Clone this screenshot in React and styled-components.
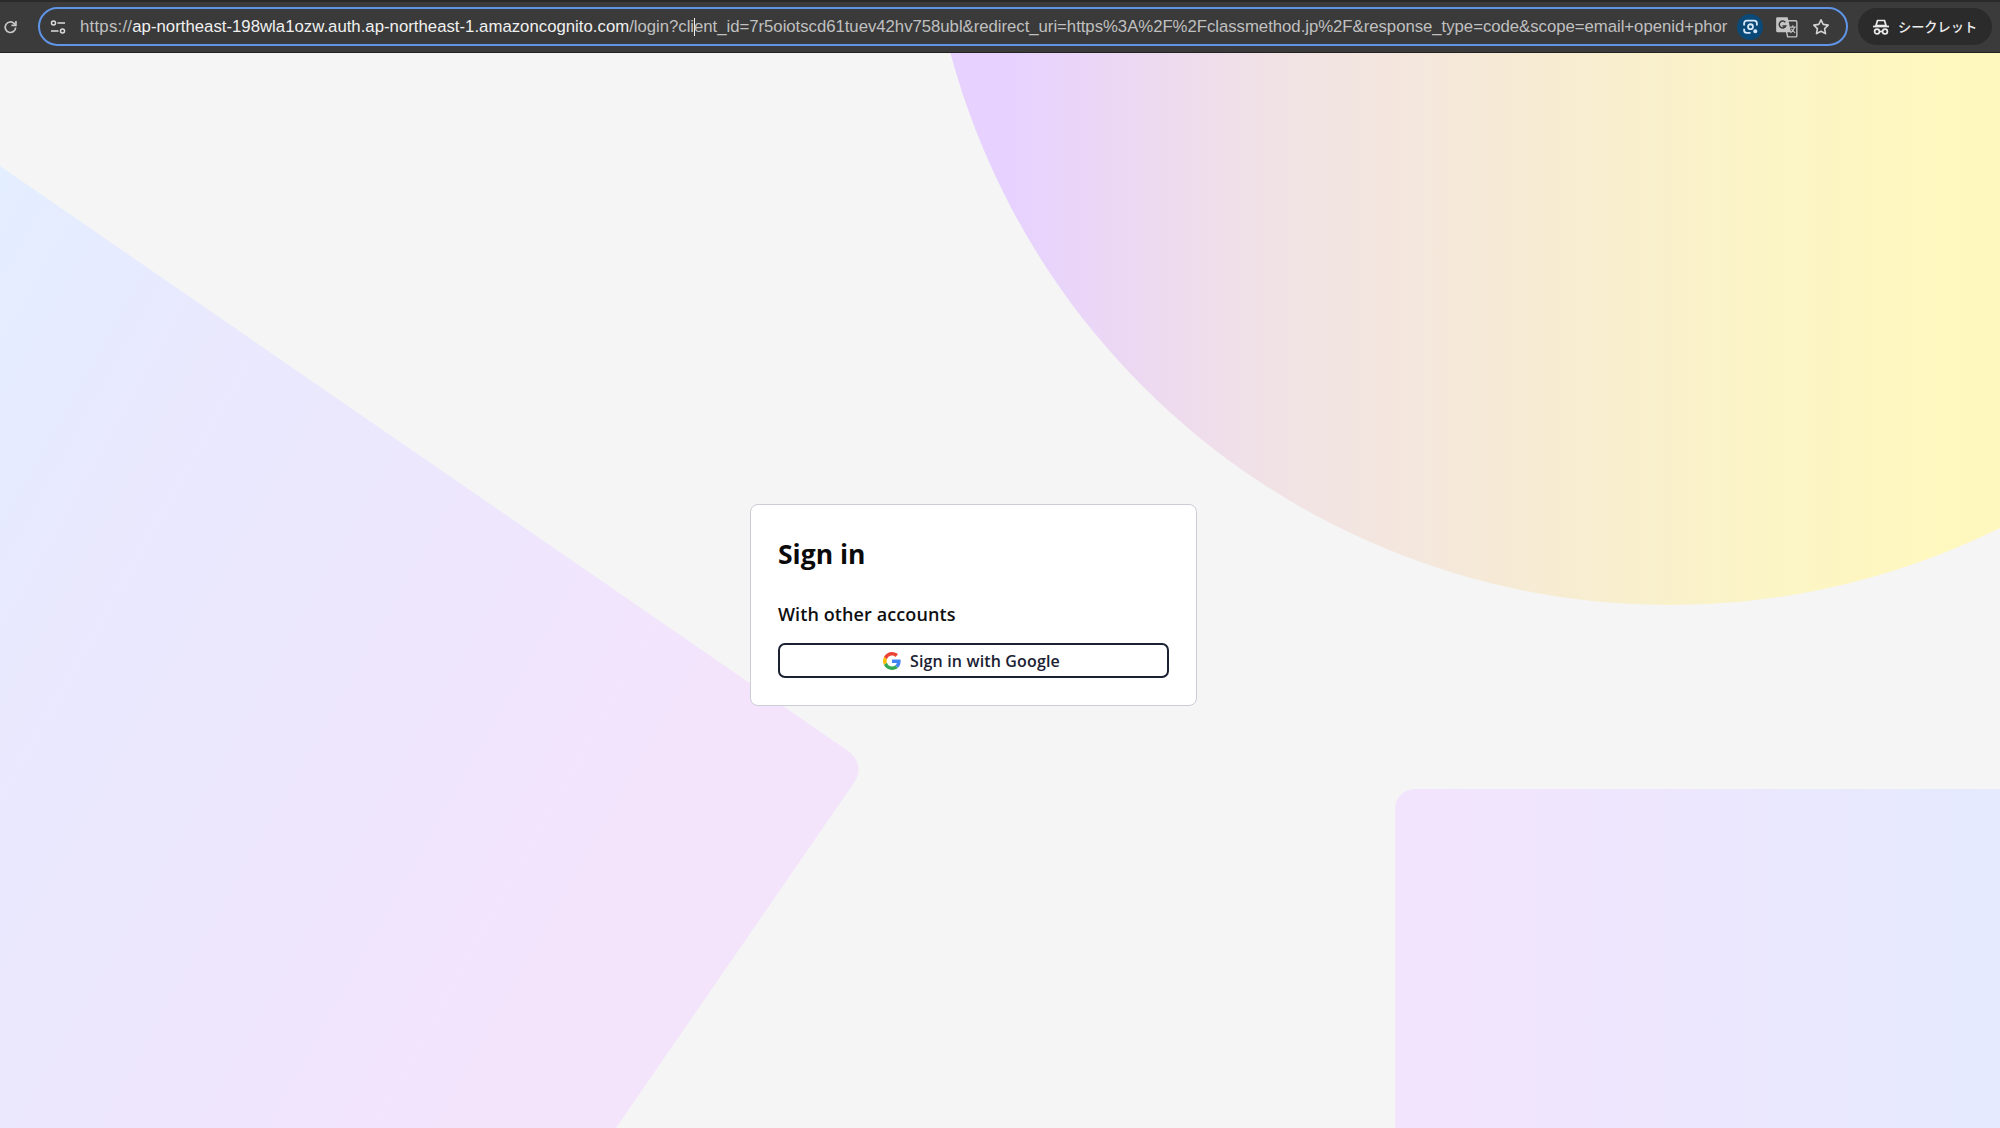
import React from 'react'
import styled, { createGlobalStyle } from 'styled-components'

const GlobalStyle = createGlobalStyle`
  html, body {
    margin: 0;
    padding: 0;
    height: 100%;
    background: #f5f5f5;
    overflow: hidden;
  }
`

const Page = styled.div`
  display: flex;
  flex-direction: column;
  width: 2000px;
  height: 1128px;
  overflow: hidden;
`

const Toolbar = styled.header`
  display: flex;
  align-items: center;
  flex: 0 0 53px;
  height: 53px;
  box-sizing: border-box;
  padding: 0 8px 1px 3px;
  background: #3b3b3b;
  border-top: 2px solid #2a2a2a;
  border-bottom: 1px solid #222;
`

const Reload = styled.button`
  display: flex;
  align-items: center;
  justify-content: center;
  flex: 0 0 15px;
  width: 15px;
  height: 20px;
  margin-right: 20px;
  padding: 0;
  border: 0;
  background: none;
  color: #c8c8c8;
`

const Omnibox = styled.div`
  display: flex;
  align-items: center;
  flex: 0 0 1810px;
  height: 39px;
  box-sizing: border-box;
  padding: 0 0 0 10px;
  border: 2px solid #5f94e6;
  border-radius: 20px;
  background: #3a3a3a;
`

const SiteInfo = styled.span`
  display: flex;
  flex: 0 0 16px;
  margin-right: 14px;
  color: #dcdcdc;
`

const Url = styled.div`
  flex: 0 0 1647px;
  min-width: 0;
  white-space: nowrap;
  font: 16.76px "Liberation Sans", Arial, sans-serif;
  letter-spacing: -0.033px;
  color: #c0c0c0;
`

const Scheme = styled.span`
  letter-spacing: 0.25px;
`

const Host = styled.span`
  letter-spacing: 0.01px;
  color: #f0f0f0;
`

const Caret = styled.span`
  display: inline-block;
  width: 1px;
  height: 18px;
  margin: 0 -0.5px;
  vertical-align: -4px;
  background: #f0f0f0;
`

const Actions = styled.div`
  display: flex;
  align-items: center;
  gap: 11px;
  margin-left: 10px;
`

const LensBadge = styled.span`
  display: flex;
  align-items: center;
  justify-content: center;
  width: 26px;
  height: 26px;
  border-radius: 50%;
  background: #0b4a78;
  color: #d6e8f8;
`

const ActionIcon = styled.span`
  display: flex;
  align-items: center;
  justify-content: center;
  width: 24px;
  height: 24px;
  color: #d4d4d4;
`

const Incognito = styled.div`
  display: flex;
  align-items: center;
  gap: 8px;
  flex: 0 0 134px;
  box-sizing: border-box;
  height: 37px;
  margin-left: 10px;
  padding: 0 0 0 14px;
  border-radius: 19px;
  background: #2b2b2b;
  color: #ececec;
  font: 500 13.2px "Noto Sans CJK JP", "Liberation Sans", sans-serif;
`

const Stage = styled.main`
  position: relative;
  display: flex;
  flex: 1;
  align-items: flex-start;
  justify-content: flex-start;
  overflow: hidden;
  background: #f5f5f5;
`

const Backdrop = styled.svg`
  position: absolute;
  inset: 0;
  width: 100%;
  height: 100%;
`

const Card = styled.section`
  position: relative;
  box-sizing: border-box;
  width: 447px;
  height: 202px;
  margin: 451px 0 0 750px;
  padding: 30px 27px 0;
  border: 1px solid #ccccd6;
  border-radius: 8px;
  background: #fff;
  font-family: "Open Sans", sans-serif;
`

const Title = styled.h1`
  margin: 0;
  font-size: 26.5px;
  line-height: 38px;
  font-weight: 700;
  color: #0a0a0a;
`

const Subtitle = styled.h2`
  margin: 28px 0 0;
  font-size: 18px;
  line-height: 26px;
  font-weight: 600;
  letter-spacing: 0.1px;
  color: #0f0f12;
`

const GoogleButton = styled.button`
  display: flex;
  align-items: center;
  justify-content: center;
  gap: 9px;
  width: 391px;
  height: 35px;
  margin-top: 16px;
  padding: 0 4px 0 0;
  border: 2px solid #1b2133;
  border-radius: 7px;
  background: #fff;
  color: #1b2133;
  font: 600 16px "Open Sans", sans-serif;
  letter-spacing: 0.15px;
`

function GoogleLogo() {
  return (
    <svg width="18" height="18" viewBox="0 0 48 48">
      <path fill="#EA4335" d="M24 9.500c3.500 0 6.700 1.300 9.100 3.500l6.800-6.800C35.800 2.400 30.300 0 24 0 14.600 0 6.500 5.400 2.600 13.200l7.900 6.100C12.400 13.600 17.700 9.500 24 9.500z" />
      <path fill="#4285F4" d="M47 24.500c0-1.600-.1-3.100-.4-4.500H24v9h12.900c-.6 3-2.300 5.500-4.800 7.200l7.700 6c4.500-4.200 7.200-10.300 7.200-17.700z" />
      <path fill="#FBBC05" d="M10.500 28.700c-.5-1.500-.8-3-.8-4.700s.3-3.200.8-4.700l-7.900-6.100C1 16.400 0 20.100 0 24s1 7.600 2.600 10.800l7.900-6.100z" />
      <path fill="#34A853" d="M24 48c6.500 0 11.900-2.100 15.800-5.800l-7.700-6c-2.100 1.400-4.900 2.300-8.100 2.300-6.300 0-11.600-4.100-13.500-9.800l-7.900 6.100C6.500 42.600 14.600 48 24 48z" />
    </svg>
  )
}

export default function App() {
  return (
    <Page>
      <GlobalStyle />
      <Toolbar>
        <Reload aria-label="reload">
          <svg width="16" height="16" viewBox="0 0 16 16" fill="none" stroke="currentColor" strokeWidth="1.800">
            <path d="M13.500 8.500a5.600 5.600 0 1 1-1.700-4.300L13.500 6" />
            <path d="M13.800 1.500v4.800H9" />
          </svg>
        </Reload>
        <Omnibox>
          <SiteInfo>
            <svg width="16" height="16" viewBox="0 0 16 16" fill="none" stroke="currentColor" strokeWidth="1.500">
              <circle cx="3.500" cy="4" r="2" />
              <path d="M7.500 4H15M1 12h7.500" />
              <circle cx="12.500" cy="12" r="2" />
            </svg>
          </SiteInfo>
          <Url>
            <Scheme>https://</Scheme><Host>ap-northeast-198wla1ozw.auth.ap-northeast-1.amazoncognito.com</Host>/login?cli<Caret />ent_id=7r5oiotscd61tuev42hv758ubl&amp;redirect_uri=https%3A%2F%2Fclassmethod.jp%2F&amp;response_type=code&amp;scope=email+openid+phor
          </Url>
          <Actions>
            <LensBadge>
              <svg width="17" height="17" viewBox="0 0 16 16" fill="none" stroke="currentColor" strokeWidth="1.700">
                <path d="M2 7V5a2.500 2.500 0 0 1 2.500-2.500h7A2.500 2.500 0 0 1 14 5v2M2 10v1.500A2.500 2.500 0 0 0 4.500 14H8" />
                <circle cx="8" cy="8.200" r="2.300" />
                <circle cx="12.500" cy="12.500" r="1.100" fill="currentColor" />
              </svg>
            </LensBadge>
            <ActionIcon>
              <svg width="23" height="23" viewBox="0 0 20 20">
                <path d="M8 5h10a1 1 0 0 1 1 1v12a1 1 0 0 1-1 1h-7z" fill="#3a3a3a" stroke="#c4c4c4" strokeWidth="1.200" />
                <path d="M2 2h9l3 13H2a1 1 0 0 1-1-1V3a1 1 0 0 1 1-1z" fill="#c4c4c4" />
                <path d="M9 6.300a3 3 0 1 0 .4 3.200H6.500" fill="none" stroke="#3a3a3a" strokeWidth="1.300" />
                <path d="M13 10.500h5M15.500 9v1.500M17 10.500c-.5 2.500-2 4-3.500 5M14.300 12c.7 1.500 2 2.800 3.200 3.500" fill="none" stroke="#c4c4c4" strokeWidth="1" />
              </svg>
            </ActionIcon>
            <ActionIcon>
              <svg width="18" height="18" viewBox="0 0 18 18" fill="none" stroke="currentColor" strokeWidth="1.600" strokeLinejoin="round">
                <path d="M9 1.800l2.200 4.600 5 .7-3.600 3.500.9 5L9 13.200l-4.500 2.400.9-5L1.800 7.100l5-.7z" />
              </svg>
            </ActionIcon>
          </Actions>
        </Omnibox>
        <Incognito>
          <svg width="18" height="18" viewBox="0 0 18 18" fill="none" stroke="currentColor" strokeWidth="1.700">
            <path d="M5.500 2.500h7l1.500 5H4z" />
            <path d="M1 8.500h16" />
            <circle cx="5" cy="13.500" r="2.400" />
            <circle cx="13" cy="13.500" r="2.400" />
            <path d="M7.400 13.500h3.200" />
          </svg>
          シークレット
        </Incognito>
      </Toolbar>
      <Stage>
        <Backdrop viewBox="0 0 2000 1075" aria-hidden="true">
          <defs>
            <linearGradient id="sun" gradientUnits="userSpaceOnUse" x1="950" y1="0" x2="2000" y2="0">
              <stop offset="0.06" stopColor="#e7d2ff" />
              <stop offset="0.19" stopColor="#edd9f0" />
              <stop offset="0.32" stopColor="#f1e3e4" />
              <stop offset="0.45" stopColor="#f4e7dc" />
              <stop offset="0.57" stopColor="#f7ecd2" />
              <stop offset="0.77" stopColor="#fbf4c6" />
              <stop offset="0.96" stopColor="#fff8be" />
            </linearGradient>
            <linearGradient id="kite" gradientUnits="userSpaceOnUse" x1="0" y1="113" x2="753" y2="537">
              <stop offset="0" stopColor="#e3eeff" />
              <stop offset="0.3" stopColor="#e9e9fe" />
              <stop offset="0.6" stopColor="#ece7fd" />
              <stop offset="1" stopColor="#f3e4fc" />
            </linearGradient>
            <linearGradient id="slab" gradientUnits="userSpaceOnUse" x1="1395" y1="0" x2="2000" y2="0">
              <stop offset="0" stopColor="#f3e4fd" />
              <stop offset="1" stopColor="#e5eafe" />
            </linearGradient>
          </defs>
          <circle cx="1670" cy="-193" r="745" fill="url(#sun)" />
          <path d="M-100 44 L848.900 698.500 A22 22 0 0 1 854.500 729.100 L547 1175 L-100 1175 Z" fill="url(#kite)" />
          <rect x="1395" y="736" width="700" height="500" rx="20" fill="url(#slab)" />
        </Backdrop>
        <Card>
          <Title>Sign in</Title>
          <Subtitle>With other accounts</Subtitle>
          <GoogleButton>
            <GoogleLogo />
            Sign in with Google
          </GoogleButton>
        </Card>
      </Stage>
    </Page>
  )
}
